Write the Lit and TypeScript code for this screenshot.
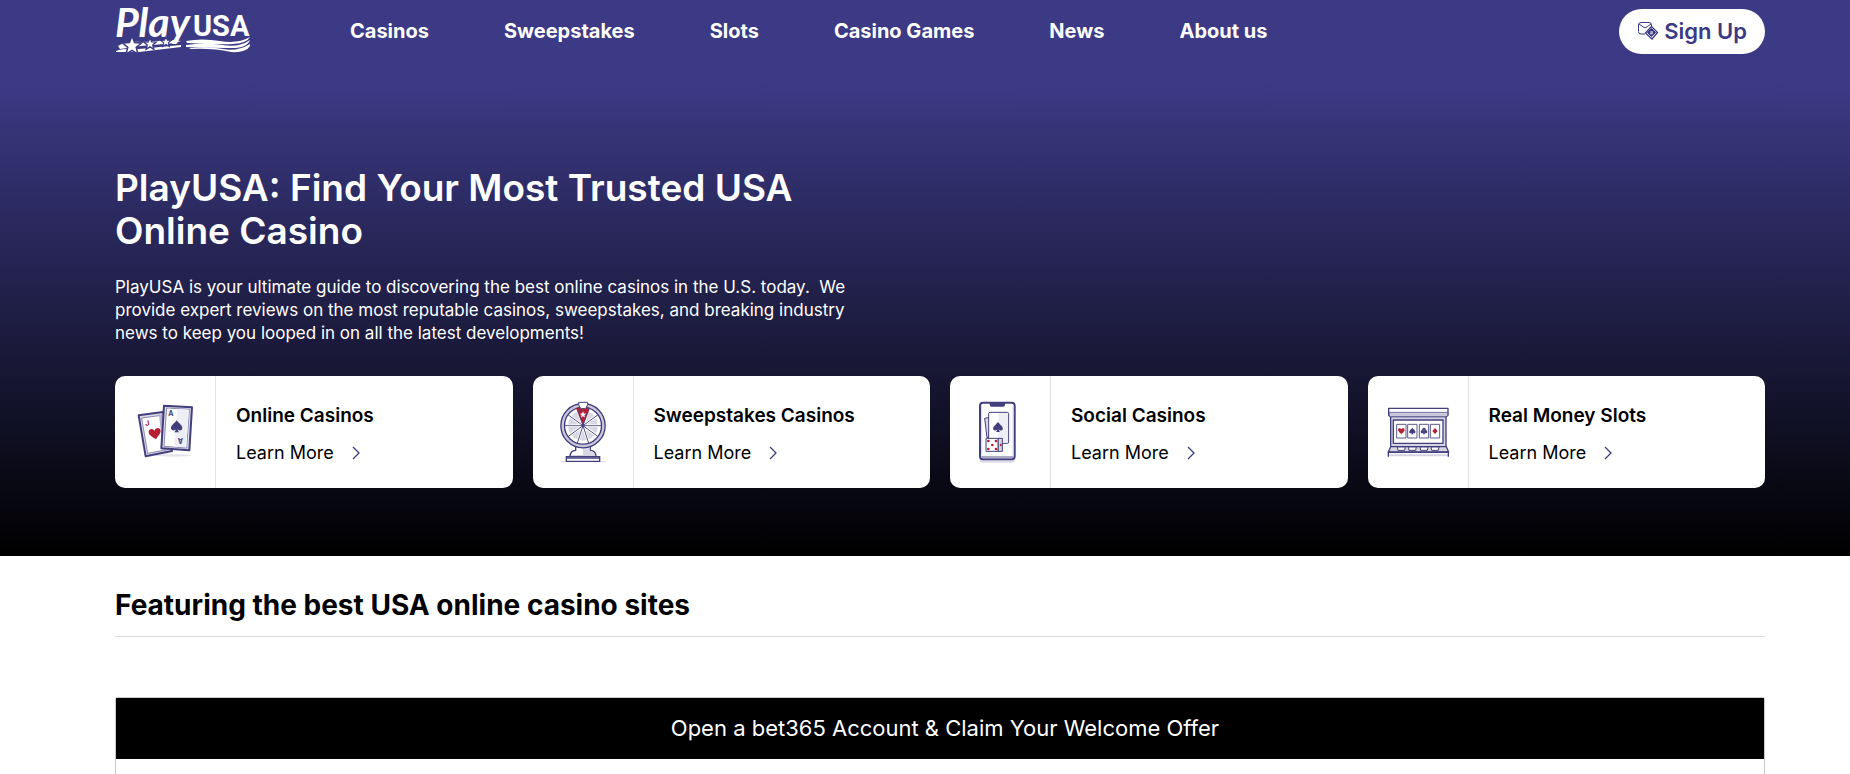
import { LitElement, html, css, svg } from "lit";
import { customElement } from "lit/decorators.js";

const spade = svg`<path d="M0-18C5-10 17-4 17 5C17 13 7 15 3 9C3 13 5 16 8 18H-8C-5 16-3 13-3 9C-7 15-17 13-17 5C-17-4-5-10 0-18Z"/>`;
const heart = svg`<path d="M0 17C-6 10-18 3-18-7C-18-17-5-19 0-9C5-19 18-17 18-7C18 3 6 10 0 17Z"/>`;
const starPath = "M0-10L2.6-3.4 9.6-3 4.2 1.4 6 8.2 0 4.4-6 8.2-4.2 1.4-9.6-3-2.6-3.4Z";

const cardsIcon = svg`
  <svg class="icon" viewBox="70 90 192 192" aria-hidden="true">
    <ellipse cx="190" cy="256" rx="55" ry="4" fill="#e4e2ea"/>
    <g stroke-linejoin="round">
      <path d="M87 136L160 126L187 243L108 259Z" fill="#dcdbe8" stroke="#423f7d" stroke-width="6"/>
      <path d="M96 144L156 136L176 238L114 250Z" fill="#fff" stroke="#5c5990" stroke-width="2"/>
      <path d="M148 134L166 132L178 240L160 243Z" fill="#b3b1cb"/>
      <path d="M163 107L247 112L239 241L155 235Z" fill="#dcdbe8" stroke="#423f7d" stroke-width="6"/>
      <path d="M171 114L239 118L231 234L163 229Z" fill="#fff" stroke="#5c5990" stroke-width="2"/>
      <path d="M202 117L238 119L230 232L194 230Z" fill="#eeeef5"/>
    </g>
    <g transform="translate(136 191) rotate(-10)" fill="#b72032">${heart}</g>
    <g transform="translate(201 169)" fill="#423f7d">${spade}</g>
    <text x="106" y="168" font-size="22" fill="#b72032" transform="rotate(-9 108 160)">J</text>
    <text x="176" y="139" font-size="21" fill="#423f7d">A</text>
    <text x="-7" y="7" font-size="21" fill="#423f7d" transform="translate(213 212) rotate(180)">A</text>
  </svg>`;

const spokes = [18, 54, 90, 126, 162, 198, 234, 270, 306, 342];
const wheelIcon = svg`
  <svg class="icon" viewBox="76 90 192 192" aria-hidden="true">
    <path d="M106 275H240" stroke="#e0dfe8" stroke-width="4"/>
    <path d="M150 226H194V241Q210 242 211 259H133Q134 242 150 241Z" fill="#fff" stroke="#423f7d" stroke-width="4"/>
    <path d="M172 228H192V243Q208 245 209 257H172Z" fill="#d9d9e3"/>
    <path d="M122 260H222V274H122Z" fill="#fff" stroke="#423f7d" stroke-width="4"/>
    <path d="M122 264H222" stroke="#423f7d" stroke-width="5"/>
    <circle cx="172" cy="167" r="61" fill="#fff" stroke="#423f7d" stroke-width="15"/>
    <circle cx="172" cy="167" r="61" fill="none" stroke="#c9c8db" stroke-width="7"/>
    ${[0, 36, 72, 108, 144, 180, 216, 252, 288, 324].map(
      (a) => svg`<path d="M172 153L162 124Q172 119 182 124Z" fill="#d9d9e3" transform="rotate(${a} 172 167)"/>`
    )}
    <path d="M172 167L151 115Q172 107 193 115Z" fill="#b72032"/>
    ${spokes.map((a) => svg`<path d="M172 167V112" stroke="#423f7d" stroke-width="2.5" transform="rotate(${a} 172 167)"/>`)}
    <path d="M159 97H186V104L180 116H165L159 104Z" fill="#fff" stroke="#423f7d" stroke-width="3"/>
    <path d=${starPath} fill="#fff" transform="translate(172 134)"/>
    <circle cx="172" cy="167" r="4" fill="#423f7d"/>
  </svg>`;

const phoneIcon = svg`
  <svg class="icon" viewBox="84 90 192 192" aria-hidden="true">
    <rect x="118" y="110" width="108" height="168" rx="10" fill="#dddce8"/>
    <rect x="120" y="98" width="104" height="170" rx="9" fill="#fff" stroke="#423f7d" stroke-width="6"/>
    <path d="M124 258H220V262Q220 265 215 265H129Q124 265 124 262Z" fill="#aaa8c5"/>
    <path d="M125 106V256M219 106V256" stroke="#d5d4e2" stroke-width="3"/>
    <path d="M149 99H195V104Q195 110 189 110H155Q149 110 149 104Z" fill="#423f7d"/>
    <path d="M148 142L134 145L141 203H150Z" fill="#d9d9e5" stroke="#423f7d" stroke-width="3"/>
    <rect x="146" y="127" width="60" height="93" rx="4" fill="#fff" stroke="#423f7d" stroke-width="3"/>
    <path d="M175 129H204V218H175Z" fill="#eeeef5"/>
    <g transform="translate(174 171) scale(.85)" fill="#423f7d">${spade}</g>
    <path d="M174 205H187V244H174Z" fill="#d9d9e5" stroke="#423f7d" stroke-width="3"/>
    <path d="M138 205H174V244H138Z" fill="#fff" stroke="#423f7d" stroke-width="3"/>
    <g fill="#b72032">
      <circle cx="145" cy="213" r="4"/><circle cx="168" cy="213" r="4"/><circle cx="157" cy="225" r="4"/>
      <circle cx="145" cy="237" r="4"/><circle cx="168" cy="237" r="4"/><ellipse cx="182" cy="225" rx="3" ry="4"/>
    </g>
  </svg>`;

const slotsIcon = svg`
  <svg class="icon" viewBox="76 90 192 192" aria-hidden="true">
    <g stroke="#423f7d" stroke-width="4" stroke-linejoin="round">
      <path d="M90 138H256V230H90Z" fill="#d5d4e2"/>
      <path d="M84 115H262V136L257 140H89L84 136Z" fill="#fff"/>
      <path d="M86 127H261V136L257 140H89L86 136Z" fill="#c9c8db" stroke-width="2"/>
      <path d="M98 150H247V220H98Z" fill="#fff"/>
      <path d="M90 230H257L264 246H83Z" fill="#d5d4e2"/>
    </g>
    <path d="M82 247H265" stroke="#423f7d" stroke-width="4"/>
    <path d="M85 256H262" stroke="#d5d4e2" stroke-width="6"/>
    <path d="M83 244V260M263 244V260" stroke="#423f7d" stroke-width="4"/>
    ${[122, 155, 190, 223].map(
      (x) => svg`<path d="M${x - 14} 163H${x + 14}V204H${x - 14}Z" fill="#fff" stroke="#5c5990" stroke-width="3"/>
        <path d="M${x - 12} 231L${x - 10} 241H${x + 10}L${x + 12} 231Z" fill="#fff" stroke="#423f7d" stroke-width="3"/>`
    )}
    <g transform="translate(122 183) scale(.55)" fill="#b72032">${heart}</g>
    <g transform="translate(155 183) scale(.55)" fill="#423f7d">${spade}</g>
    <g fill="#423f7d"><circle cx="190" cy="178" r="5"/><circle cx="185" cy="185" r="5"/><circle cx="195" cy="185" r="5"/><path d="M190 181L193 193H187Z"/></g>
    <path d="M223 174L231 183L223 192L215 183Z" fill="#b72032"/>
  </svg>`;

const logo = svg`
  <svg class="logo" viewBox="0 0 136 48" role="img" aria-label="PlayUSA">
    <g fill="#fff">
      <text class="logo-script" x="0" y="30" font-size="41">Play</text>
      <text class="logo-block" x="78" y="29" font-size="29">USA</text>
      <path d="M3 39Q11 34 27 35L57 33L66 34L60 36L26 39L5 42Z"/>
      <path d="M1 44Q8 41 24 42L66 38V40L24 45H1Z"/>
      <path d="M71 34Q87 31 105 34T135 30Q132 36 118 37T72 36Z"/>
      <path d="M71 38Q90 35 107 38T135 33Q132 41 117 41T71 40Z"/>
      <path d="M74 41Q94 39 108 42T135 37V39Q131 46 116 45Q97 41 76 42Z"/>
    </g>
    <g fill="#fff" stroke="#3c3a85">
      <path d=${starPath} stroke-width="1.5" transform="translate(17 39)"/>
      <path d=${starPath} stroke-width="2" transform="translate(35 37) scale(.65)"/>
      <path d=${starPath} stroke-width="2" transform="translate(51 35) scale(.55)"/>
    </g>
  </svg>`;

const mailIcon = svg`
  <svg class="mail" viewBox="0 0 22 20" fill="none" stroke="#3c3a85" aria-hidden="true">
    <path d="M8 13H4Q1.500 13 1.500 10.500V4Q1.500 1.500 4 1.500H12Q14.500 1.500 14.500 4V5"/>
    <path d="M2 3L7 6.500Q8 7 9 6.500L14 3"/>
    <path d="M14.500 5.500L20.500 11.500L15 18L8.500 12Z" fill="#fff" stroke-width="1.300"/>
    <path d="M14.500 7.500L18.500 11.500L14.500 15.500L10.500 11.500Z" fill="#3c3a85"/>
    <path d="M13 11H16M13 12.500H16M14 10V13.500M15.200 10V13.500" stroke="#fff" stroke-width=".5"/>
  </svg>`;

const navItems = ["Casinos", "Sweepstakes", "Slots", "Casino Games", "News", "About us"];
const categories = [
  { title: "Online Casinos", icon: cardsIcon },
  { title: "Sweepstakes Casinos", icon: wheelIcon },
  { title: "Social Casinos", icon: phoneIcon },
  { title: "Real Money Slots", icon: slotsIcon },
];

@customElement("app-root")
export class AppRoot extends LitElement {
  static styles = css`
    :host {
      display: flex;
      flex-direction: column;
      min-height: 100vh;
      background: #fff;
      color: #000;
      font-family: Inter, "Open Sans", sans-serif;
    }
    * { box-sizing: border-box; }
    a { color: inherit; text-decoration: none; }
    h1, h2, h3, p, ul { margin: 0; padding: 0; }
    .wrap { padding-left: 115px; padding-right: 85px; }
    .header {
      display: flex;
      align-items: center;
      height: 62px;
      background: #3c3a85;
      color: #fff;
    }
    .home { display: flex; margin-right: 99px; }
    .logo { display: block; width: 136px; height: 48px; overflow: visible; }
    .logo-script { font-family: Lato, sans-serif; font-weight: 700; font-style: italic; }
    .logo-block { font-family: Roboto, sans-serif; font-weight: 700; }
    .nav { display: flex; gap: 75px; list-style: none; font-size: 20px; line-height: 24px; font-weight: 700; white-space: nowrap; }
    .signup {
      display: flex;
      align-items: center;
      gap: 5px;
      height: 45px;
      margin-left: auto;
      padding: 0 18px;
      border: 0;
      border-radius: 24px;
      background: #fff;
      color: #3c3a85;
      font-family: inherit;
      font-size: 22px;
      font-weight: 600;
      white-space: nowrap;
    }
    .mail { width: 22px; height: 20px; }
    .hero {
      padding-top: 104px;
      padding-bottom: 68px;
      background: linear-gradient(#3c3a85 4%, #000);
      color: #fff;
    }
    .hero-title { max-width: 760px; font-size: 37px; line-height: 43px; font-weight: 600; }
    .hero-text { max-width: 760px; margin-top: 24px; font-size: 17px; line-height: 23px; }
    .cards { display: grid; grid-template-columns: repeat(4, 1fr); gap: 20px; margin-top: 31px; }
    .card {
      display: flex;
      min-height: 112px;
      border-radius: 10px;
      background: #fff;
      color: #000;
    }
    .card-icon {
      display: flex;
      flex: 0 0 101px;
      align-items: center;
      justify-content: center;
      border-right: 1px solid #dfe0e8;
    }
    .icon { width: 64px; height: 64px; font-family: Inter, sans-serif; font-weight: 700; }
    .card-body { display: flex; flex-direction: column; gap: 13px; padding: 28px 20px 20px; }
    .card-title { font-size: 19px; line-height: 24px; font-weight: 600; }
    .learn { display: flex; align-items: center; gap: 18px; font-size: 18px; line-height: 24px; }
    .chevron { width: 8px; height: 14px; }
    .featured { display: flex; flex: 1; flex-direction: column; padding-top: 31px; }
    .featured-title {
      padding-bottom: 13px;
      border-bottom: 1px solid #dcdcdc;
      font-size: 28px;
      line-height: 36px;
      font-weight: 700;
    }
    .offer {
      flex: 1;
      margin-top: 60px;
      border: 1px solid #c8c8c8;
      border-bottom: 0;
      border-radius: 3px 3px 0 0;
    }
    .offer-link {
      display: block;
      padding: 18px 0 18px 10px;
      background: #000;
      color: #fff;
      font-size: 22px;
      line-height: 25px;
      text-align: center;
    }
  `;

  render() {
    return html`
      <header class="header wrap">
        <a class="home" href="#">${logo}</a>
        <nav aria-label="Main">
          <ul class="nav">
            ${navItems.map((item) => html`<li><a href="#">${item}</a></li>`)}
          </ul>
        </nav>
        <button class="signup" type="button">${mailIcon}<span>Sign Up</span></button>
      </header>
      <section class="hero wrap">
        <h1 class="hero-title">PlayUSA: Find Your Most Trusted USA Online Casino</h1>
        <p class="hero-text">
          PlayUSA is your ultimate guide to discovering the best online casinos in the U.S. today.&nbsp; We provide
          expert reviews on the most reputable casinos, sweepstakes, and breaking industry news to keep you looped in on
          all the latest developments!
        </p>
        <div class="cards">
          ${categories.map(
            (c) => html`
              <a class="card" href="#">
                <div class="card-icon">${c.icon}</div>
                <div class="card-body">
                  <h3 class="card-title">${c.title}</h3>
                  <span class="learn">
                    Learn More
                    <svg class="chevron" viewBox="0 0 8 14" fill="none" stroke="#3c3a85" stroke-width="1.3" aria-hidden="true">
                      <path d="M1 1L7 7L1 13" />
                    </svg>
                  </span>
                </div>
              </a>
            `
          )}
        </div>
      </section>
      <section class="featured wrap">
        <h2 class="featured-title">Featuring the best USA online casino sites</h2>
        <article class="offer">
          <a class="offer-link" href="#">Open a bet365 Account &amp; Claim Your Welcome Offer</a>
        </article>
      </section>
    `;
  }
}
